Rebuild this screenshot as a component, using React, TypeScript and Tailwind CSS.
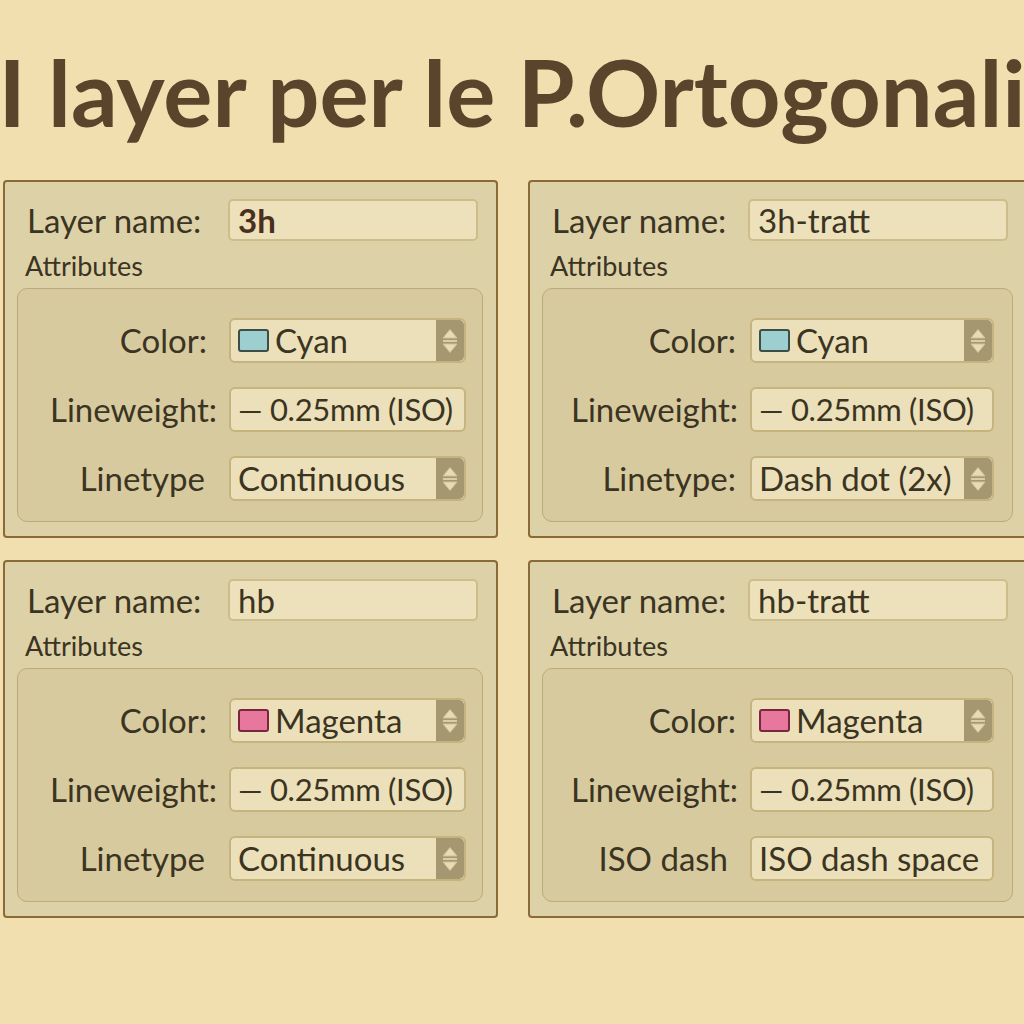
import React from "react";

type Row = { label: string; kind: "select" | "plain"; text: string; swatch?: "cyan" | "magenta"; labelPr?: string; tight?: boolean };

type PanelProps = { name: string; bold?: boolean; rows: Row[]; wide?: boolean };

function Spinner() {
  return (
    <div className="w-[28px] self-stretch bg-[#a59770] rounded-r-[5px] flex items-center justify-center">
      <svg width="18" height="28" viewBox="0 0 18 28">
        <path d="M9 2.5 L16 11 L2 11 Z" fill="#e7dcb5" stroke="#cfc29a" strokeWidth="1" strokeLinejoin="round" />
        <line x1="2" y1="14" x2="16" y2="14" stroke="#e7dcb5" strokeWidth="1.6" />
        <path d="M2 17 L16 17 L9 25.5 Z" fill="#e7dcb5" stroke="#cfc29a" strokeWidth="1" strokeLinejoin="round" />
      </svg>
    </div>
  );
}

function Swatch({ c }: { c: "cyan" | "magenta" }) {
  return c === "cyan" ? (
    <span className="inline-block w-[31px] h-[23px] rounded-[3px] border-2 border-[#3e4d46] bg-[#9dcfd1] mr-[6px] shrink-0" />
  ) : (
    <span className="inline-block w-[31px] h-[23px] rounded-[3px] border-2 border-[#7a2642] bg-[#e8779d] mr-[6px] shrink-0" />
  );
}

function Panel({ name, bold, rows, wide }: PanelProps) {
  return (
    <div className={`${wide ? "w-[500px]" : "w-[495px]"} h-[358px] rounded-[4px] border-2 border-[#8a6a36] bg-[#ddd1a8] pt-[17px]`}>
      <div className="flex items-center pl-[22px] pr-[18px]">
        <div className={`${wide ? "w-[196px]" : "w-[201px]"} text-[33px] leading-none text-[#3b3422]`}>Layer name:</div>
        <div className={`flex-1 h-[42px] rounded-[5px] border-2 border-[#cdbd8a] bg-[#ece1ba] flex items-center pl-[8px] text-[33px] leading-none ${bold ? "font-bold text-[#4a2f1e]" : "text-[#3b3422]"}`}>
          {name}
        </div>
      </div>
      <div className="pl-[20px] mt-[10px] text-[27px] leading-[30px] text-[#3b3422]">Attributes</div>
      <div className={`ml-[12px] mr-[13px] mt-[7px] h-[234px] rounded-[10px] border-[1.5px] border-[#bcaa79] bg-[#d7ca9f] pt-[29px] flex flex-col gap-[24px] ${wide ? "pr-[18px]" : "pr-[16px]"}`}>
        {rows.map((r, i) => (
          <div key={i} className="flex items-center h-[45px]">
            <div className={`${wide ? "w-[195px]" : "w-[199px]"} shrink-0 text-right text-[33px] leading-none text-[#3b3422] ${r.labelPr ?? ""}`}>{r.label}</div>
            <div className="ml-[12px] flex-1 h-[45px] rounded-[6px] border-2 border-[#c6b47f] bg-[#ebe0b9] flex items-stretch">
              <div className={`flex-1 flex items-center pl-[7px] leading-none text-[#3b3422] whitespace-nowrap ${r.tight ? "text-[31px] tracking-[-0.3px]" : "text-[33px]"}`}>
                {r.swatch && <Swatch c={r.swatch} />}
                {r.text}
              </div>
              {r.kind === "select" && <Spinner />}
            </div>
          </div>
        ))}
      </div>
    </div>
  );
}

export default function App() {
  const lw: Row = { label: "Lineweight:", kind: "plain", text: "— 0.25mm (ISO)", tight: true };
  return (
    <div className="w-[1024px] h-[1024px] bg-[#f1dfb0] overflow-hidden font-['Lato','Open_Sans',sans-serif]">
      <div className="h-[180px] flex justify-center whitespace-nowrap pt-[46px]">
        <div className="text-[92px] leading-none font-bold text-[#5a442c] shrink-0">I layer per le P.Ortogonali</div>
      </div>
      <div className="grid grid-cols-[495px_500px] gap-x-[30px] gap-y-[22px] pl-[3px]">
        <Panel
          name="3h"
          bold
          rows={[
            { label: "Color:", kind: "select", text: "Cyan", swatch: "cyan", labelPr: "pr-[10px]" },
            lw,
            { label: "Linetype", kind: "select", text: "Continuous", labelPr: "pr-[12px]" },
          ]}
        />
        <Panel
          name="3h-tratt"
          wide
          rows={[
            { label: "Color:", kind: "select", text: "Cyan", swatch: "cyan", labelPr: "pr-[2px]" },
            lw,
            { label: "Linetype:", kind: "select", text: "Dash dot (2x)", labelPr: "pr-[2px]" },
          ]}
        />
        <Panel
          name="hb"
          rows={[
            { label: "Color:", kind: "select", text: "Magenta", swatch: "magenta", labelPr: "pr-[10px]" },
            lw,
            { label: "Linetype", kind: "select", text: "Continuous", labelPr: "pr-[12px]" },
          ]}
        />
        <Panel
          name="hb-tratt"
          wide
          rows={[
            { label: "Color:", kind: "select", text: "Magenta", swatch: "magenta", labelPr: "pr-[2px]" },
            lw,
            { label: "ISO dash", kind: "plain", text: "ISO dash space", labelPr: "pr-[10px]" },
          ]}
        />
      </div>
    </div>
  );
}
